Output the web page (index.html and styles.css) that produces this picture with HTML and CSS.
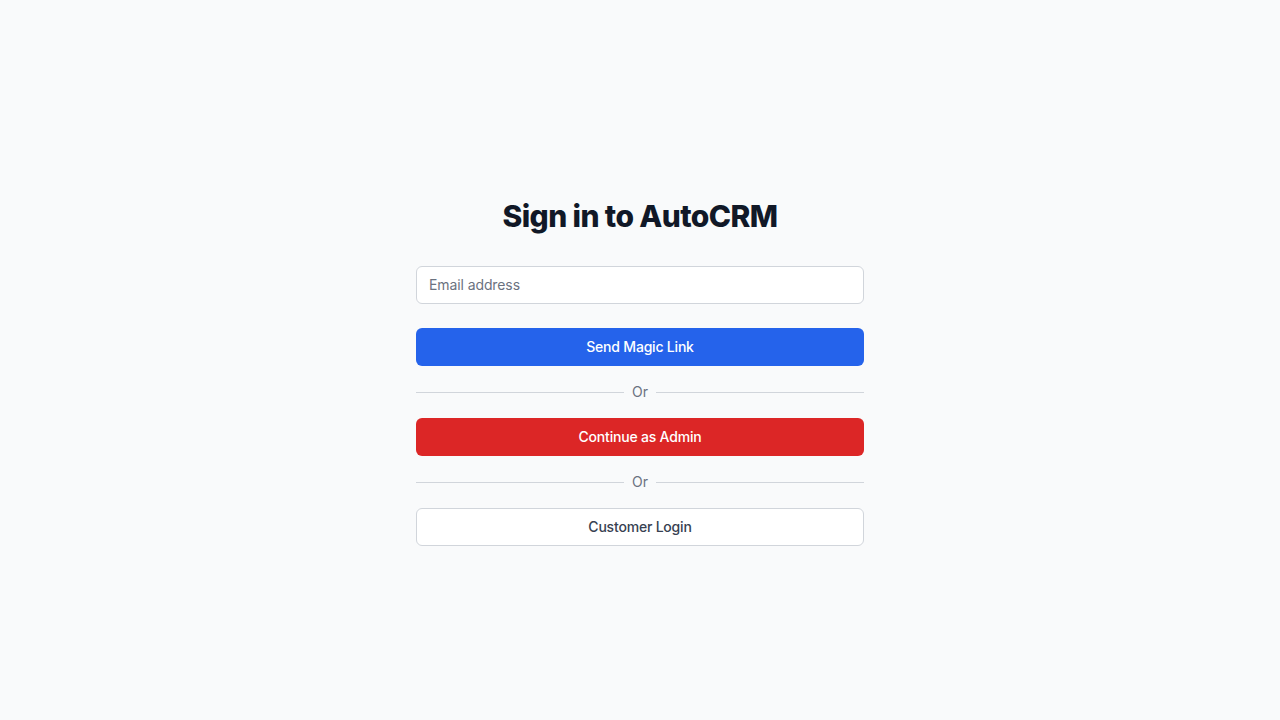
FILE: index.html
```html
<!DOCTYPE html>
<html lang="en">
<head>
<meta charset="utf-8">
<title>Sign in to AutoCRM</title>
<link rel="stylesheet" href="styles.css">
</head>
<body>
<main class="page">
  <div class="card">
    <h2 class="title">Sign in to AutoCRM</h2>
    <form class="form">
      <input class="input" type="email" placeholder="Email address">
      <div class="actions">
        <button type="button" class="btn btn-primary">Send Magic Link</button>
        <div class="divider"><span class="line"></span><span class="or">Or</span><span class="line"></span></div>
        <button type="button" class="btn btn-danger">Continue as Admin</button>
        <div class="divider"><span class="line"></span><span class="or">Or</span><span class="line"></span></div>
        <button type="button" class="btn btn-outline">Customer Login</button>
      </div>
    </form>
  </div>
</main>
</body>
</html>
```

FILE: styles.css
```css
* { box-sizing: border-box; }
html, body { margin: 0; padding: 0; }
body {
  background: #f9fafb;
  font-family: Inter, "Noto Sans", "Liberation Sans", sans-serif;
  color: #111827;
}
.page {
  min-height: 100vh;
  display: flex;
  align-items: center;
  justify-content: center;
  padding-top: 24px;
}
.card {
  width: 448px;
  display: flex;
  flex-direction: column;
  gap: 32px;
}
.title {
  margin: 0;
  text-align: center;
  font-size: 30px;
  line-height: 36px;
  font-weight: 800;
  letter-spacing: -0.6px;
  color: #111827;
}
.form {
  display: flex;
  flex-direction: column;
  gap: 24px;
  margin: 0;
}
.input {
  display: block;
  width: 100%;
  height: 38px;
  padding: 7px 12px 9px;
  border: 1px solid #d1d5db;
  border-radius: 6px;
  background: #fff;
  font-family: inherit;
  font-size: 14px;
  line-height: 20px;
  letter-spacing: -0.1px;
  color: #111827;
  outline: none;
}
.input::placeholder { color: #6b7280; }
.actions {
  display: flex;
  flex-direction: column;
  gap: 16px;
}
.btn {
  display: flex;
  align-items: center;
  justify-content: center;
  width: 100%;
  height: 38px;
  border: 1px solid transparent;
  border-radius: 6px;
  font-family: inherit;
  font-size: 14px;
  line-height: 20px;
  font-weight: 500;
  letter-spacing: -0.2px;
  cursor: pointer;
}
.btn-primary { background: #2563eb; color: #fff; }
.btn-danger { background: #dc2626; color: #fff; }
.btn-outline { background: #fff; color: #374151; border-color: #d1d5db; }
.divider {
  display: flex;
  align-items: center;
  height: 20px;
}
.line {
  flex: 1;
  height: 1px;
  background: #d1d5db;
}
.or {
  padding: 0 8px;
  font-size: 14px;
  line-height: 20px;
  color: #6b7280;
}
```
